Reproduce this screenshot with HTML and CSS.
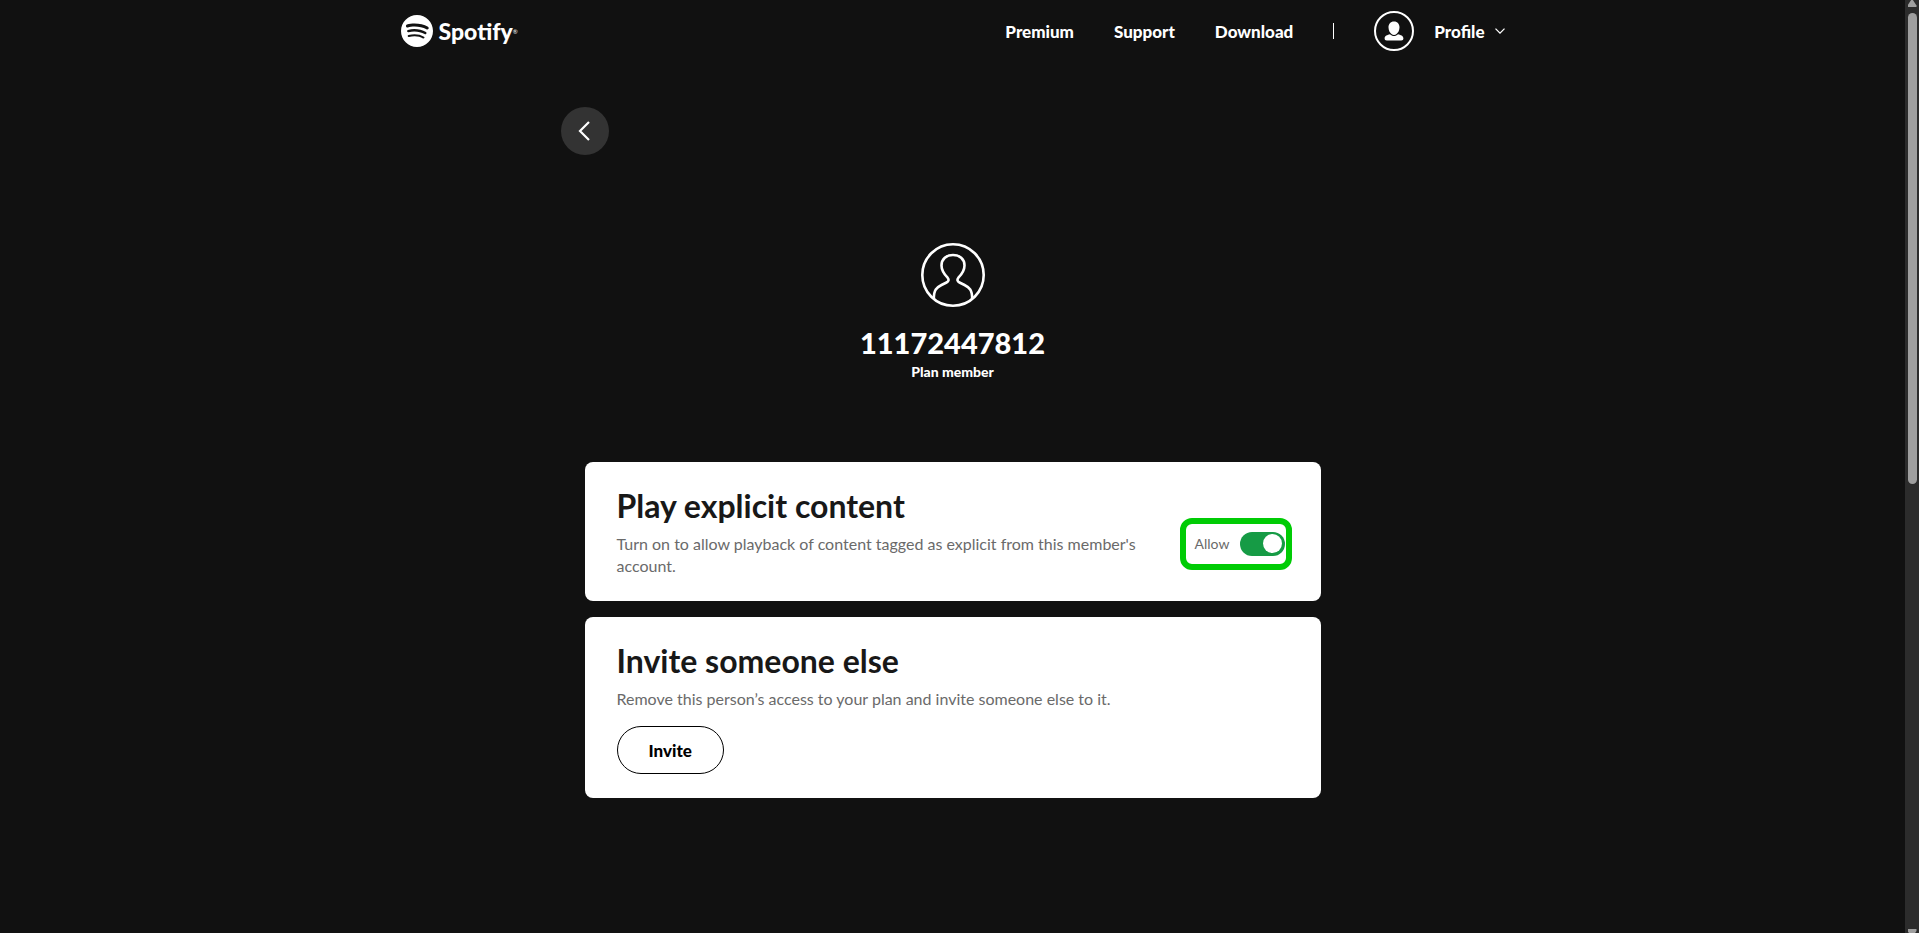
FILE: index.html
```html
<!DOCTYPE html>
<html lang="en">
<head>
  <meta charset="UTF-8">
  <meta name="viewport" content="width=device-width, initial-scale=1.0">
  <title>Plan member - Spotify</title>
  <link rel="stylesheet" href="styles.css">
</head>
<body>
  <div class="page">
    <!-- Site header -->
    <header class="header">
      <a class="logo" href="#">
        <svg class="logo-mark" viewBox="0 0 24 24" aria-hidden="true">
          <path fill="currentColor" d="M12 0C5.4 0 0 5.4 0 12s5.4 12 12 12 12-5.4 12-12S18.66 0 12 0zm5.521 17.34c-.24.359-.66.48-1.021.24-2.82-1.74-6.36-2.101-10.561-1.141-.418.122-.779-.179-.899-.539-.12-.421.18-.78.54-.9 4.56-1.021 8.52-.6 11.64 1.32.42.18.479.659.301 1.02zm1.44-3.3c-.301.42-.841.6-1.262.3-3.239-1.98-8.159-2.58-11.939-1.38-.479.12-1.02-.12-1.14-.6-.12-.48.12-1.021.6-1.141C9.6 9.9 15 10.561 18.72 12.84c.361.181.54.78.241 1.2zm.12-3.36C15.24 8.4 8.82 8.16 5.16 9.301c-.6.179-1.2-.181-1.38-.721-.18-.601.18-1.2.72-1.381 4.26-1.26 11.28-1.02 15.721 1.621.539.3.719 1.02.419 1.56-.299.421-1.02.599-1.559.3z"/>
        </svg>
        <span class="logo-text">Spotify</span><span class="logo-reg">®</span>
      </a>
      <nav class="nav">
        <a href="#">Premium</a>
        <a href="#">Support</a>
        <a href="#">Download</a>
        <span class="divider"></span>
        <button class="profile" type="button">
          <span class="profile-avatar">
            <svg width="20" height="20" viewBox="0 0 20 20" aria-hidden="true">
              <path fill="currentColor" d="M10 0.5C6.4 0.5 4.4 3.2 4.5 6.5c0.100 3 1.300 5.200 3 6.500C9 14.200 11 14.200 12.500 13c1.700-1.300 2.900-3.500 3-6.500C15.600 3.200 13.600 0.500 10 0.500z"/>
              <path fill="currentColor" d="M6 13.200C3.500 13.900 0.600 14.600 0.600 17.300c0 1.500 0.700 2.200 2.200 2.200h14.400c1.500 0 2.200-0.700 2.200-2.200 0-2.700-2.900-3.400-5.400-4.100C11.700 15.600 8.300 15.600 6 13.200z"/>
            </svg>
          </span>
          Profile
          <svg class="chevron" width="10" height="6" viewBox="0 0 10 6" aria-hidden="true">
            <path d="M0.500 0.600L5 5.100L9.500 0.600" fill="none" stroke="currentColor" stroke-width="1.300"/>
          </svg>
        </button>
      </nav>
    </header>

    <main class="main">
      <button class="back" type="button" aria-label="Back">
        <svg width="14" height="20" viewBox="0 0 14 20" aria-hidden="true">
          <path d="M11 1L2 10L11 19" fill="none" stroke="currentColor" stroke-width="2.200"/>
        </svg>
      </button>

      <!-- Member details -->
      <section class="member">
        <svg width="64" height="64" viewBox="0 0 64 64" fill="none" stroke="currentColor" stroke-width="2.600" aria-hidden="true">
          <circle cx="32" cy="32" r="30.700"/>
          <path d="M12.800 56C12.800 47 15.500 44.500 20.500 42L25.500 39.500C28 38.300 28 36.500 26.600 34.700C23 31 20.500 28 20.500 22.500C20.500 16 25.500 12 32 12S43.500 16 43.500 22.500C43.500 28 41 31 37.400 34.700C36 36.500 36 38.300 38.500 39.500L43.500 42C48.500 44.500 51.200 47 51.200 56"/>
        </svg>
        <h1>11172447812</h1>
        <p>Plan member</p>
      </section>

      <!-- Settings cards -->
      <section class="cards">
        <div class="card card-row">
          <div class="card-text">
            <h2>Play explicit content</h2>
            <p>Turn on to allow playback of content tagged as explicit from this member's account.</p>
          </div>
          <label class="toggle">
            Allow
            <input type="checkbox" role="switch" checked>
          </label>
        </div>
        <div class="card">
          <h2>Invite someone else</h2>
          <p>Remove this person’s access to your plan and invite someone else to it.</p>
          <button class="invite" type="button">Invite</button>
        </div>
      </section>
    </main>
  </div>

  <!-- Scroll track -->
  <div class="scrollbar" aria-hidden="true">
    <span class="arrow arrow-up"></span>
    <span class="thumb"></span>
    <span class="arrow arrow-down"></span>
  </div>
</body>
</html>
```
FILE: styles.css
```css
* {
  box-sizing: border-box;
}

body {
  margin: 0;
  display: flex;
  height: 100vh;
  overflow: hidden;
  background-color: #111;
  color: #fff;
  font-family: Lato, "Liberation Sans", sans-serif;
  font-size: 16px;
}

h1, h2, p {
  margin: 0;
}

a {
  color: inherit;
  text-decoration: none;
}

button {
  padding: 0;
  border: none;
  background: none;
  color: inherit;
  font: inherit;
  font-weight: 900;
  cursor: pointer;
}

.page {
  flex: 1;
}

/* Header */
.header {
  display: flex;
  justify-content: space-between;
  align-items: center;
  max-width: 1104px;
  height: 62px;
  margin: 0 auto;
}

.logo {
  display: flex;
  align-items: center;
}

.logo-mark {
  width: 32px;
  height: 32px;
  margin-right: 6px;
}

.logo-text {
  font-size: 23px;
  font-weight: 900;
  line-height: 32px;
}

.logo-reg {
  font-size: 6px;
}

.nav {
  display: flex;
  align-items: center;
  gap: 40px;
  font-size: 17px;
  font-weight: 900;
}

.divider {
  width: 1px;
  height: 16px;
  background-color: #fff;
}

.profile {
  display: flex;
  align-items: center;
}

.profile-avatar {
  display: flex;
  align-items: center;
  justify-content: center;
  width: 40px;
  height: 40px;
  margin-right: 20px;
  border: 2px solid #fff;
  border-radius: 50%;
}

.chevron {
  margin-left: 10px;
}

/* Content column */
.main {
  max-width: 784px;
  margin: 0 auto;
  padding-top: 45px;
}

.back {
  display: flex;
  align-items: center;
  justify-content: center;
  width: 48px;
  height: 48px;
  border-radius: 50%;
  background-color: #333;
}

.member {
  display: flex;
  flex-direction: column;
  align-items: center;
  padding: 88px 0 80px;
}

.member h1 {
  margin-top: 16px;
  font-size: 29px;
  font-weight: 900;
  line-height: 39px;
}

.member p {
  font-size: 14px;
  font-weight: 900;
  line-height: 20px;
}

/* Cards */
.cards {
  display: flex;
  flex-direction: column;
  gap: 16px;
  padding: 0 24px;
}

.card {
  padding: 24px 29px 24px 32px;
  border-radius: 8px;
  background-color: #fff;
  color: #181818;
}

.card-row {
  display: flex;
  align-items: center;
  gap: 24px;
}

.card-text {
  flex: 1;
}

.card h2 {
  margin-bottom: 8px;
  font-size: 32px;
  line-height: 39px;
}

.card p {
  color: #6a6a6a;
  line-height: 22px;
}

.invite {
  height: 48px;
  margin-top: 16px;
  padding: 0 31px;
  border: 1px solid #000;
  border-radius: 24px;
  color: #000;
  font-size: 17px;
}

/* Toggle */
.toggle {
  display: flex;
  align-items: center;
  justify-content: space-between;
  width: 112px;
  height: 52px;
  margin-top: 24px;
  padding: 0 1px 0 9px;
  border: 6px solid #00cc05;
  border-radius: 12px;
  color: #6a6a6a;
  font-size: 14px;
}

.toggle input {
  display: flex;
  align-items: center;
  justify-content: flex-end;
  appearance: none;
  width: 45px;
  height: 24px;
  margin: 0;
  padding: 3px;
  border-radius: 12px;
  background-color: #169b45;
}

.toggle input::before {
  content: "";
  width: 19px;
  height: 19px;
  border-radius: 50%;
  background-color: #fff;
}

/* Scroll track */
.scrollbar {
  display: flex;
  flex-direction: column;
  align-items: center;
  width: 14px;
  background-color: #2c2c2c;
}

.thumb {
  width: 9px;
  height: 471px;
  margin-top: 6px;
  margin-bottom: auto;
  border-radius: 5px;
  background-color: #9f9f9f;
}

.arrow {
  width: 9px;
  height: 7px;
  background-color: #9f9f9f;
}

.arrow-up {
  clip-path: polygon(40% 0, 60% 0, 100% 80%, 100% 100%, 0 100%, 0 80%);
}

.arrow-down {
  height: 4px;
  clip-path: polygon(0 0, 100% 0, 100% 50%, 85% 100%, 15% 100%, 0 50%);
}
```
